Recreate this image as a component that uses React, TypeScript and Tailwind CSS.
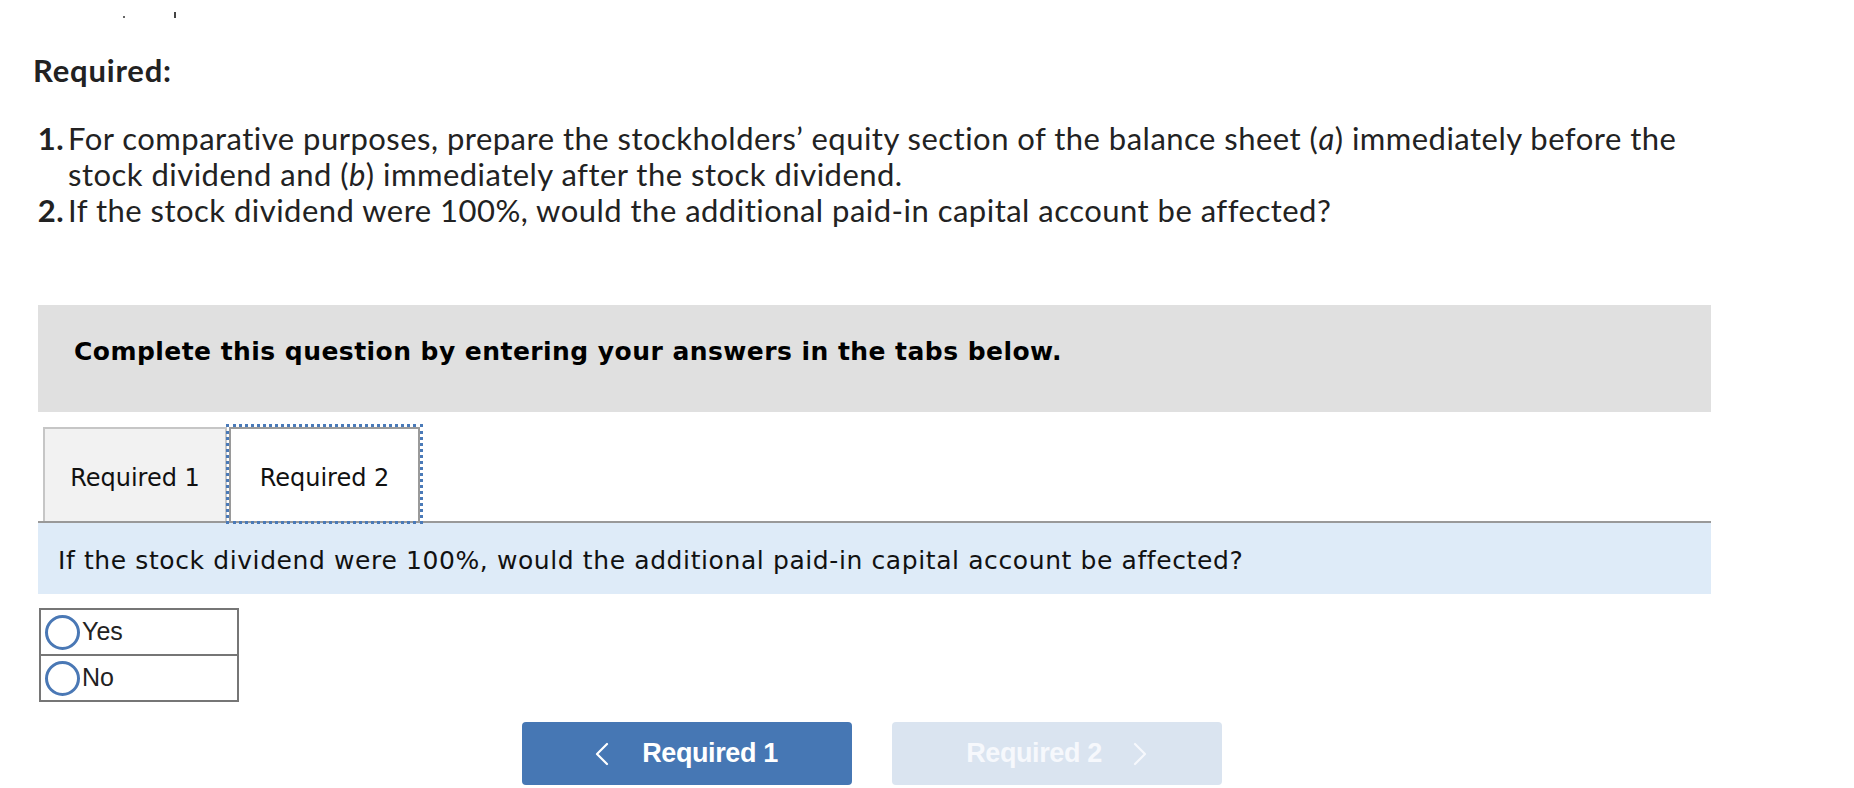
import React from 'react';

const QUESTION = 'If the stock dividend were 100%, would the additional paid-in capital account be affected?';

function Radio({ label }: { label: string }) {
  return (
    <label className="flex h-[48px] items-center border-2 border-[#767676] -mt-[2px] first:mt-0 pl-[4px]">
      <span className="h-[35px] w-[35px] rounded-full border-[3.5px] border-[#4a78b5] bg-white" />
      <span className="ml-[2px] text-[25px] text-[#222]" style={{ fontFamily: '"Liberation Sans", Arial, sans-serif' }}>
        {label}
      </span>
    </label>
  );
}

function Chevron({ dir }: { dir: 'left' | 'right' }) {
  return (
    <svg width="14" height="24" viewBox="0 0 14 24" fill="none">
      <polyline
        points={dir === 'left' ? '12,2 2,12 12,22' : '2,2 12,12 2,22'}
        stroke="currentColor"
        strokeWidth="2.2"
        strokeLinecap="round"
        strokeLinejoin="round"
      />
    </svg>
  );
}

export default function App() {
  return (
    <div className="min-h-[788px] w-[1854px] bg-white text-[#222]" style={{ fontFamily: 'Lato, "Noto Sans", sans-serif' }}>
      {/* clipped tail of the text above */}
      <div className="flex h-[20px] items-end pl-[123px] pb-[2px]">
        <span className="h-[2px] w-[2px] bg-[#666]" />
        <span className="ml-[49px] h-[6px] w-[2px] bg-[#444]" />
      </div>

      <div className="pl-[33px]">
        <h2 className="mt-[32px] text-[31px] font-bold leading-[36px] tracking-[0.8px] text-[#222]">Required:</h2>

        <ol className="mt-[32px] w-[1678px] text-[31px] leading-[36px] tracking-[0.48px] text-[#222]">
          <li className="flex">
            <span className="w-[31px] shrink-0 text-right font-bold">1.</span>
            <span className="ml-[4px]">
              For comparative purposes, prepare the stockholders’ equity section of the balance sheet (<i>a</i>) immediately
              before the stock dividend and (<i>b</i>) immediately after the stock dividend.
            </span>
          </li>
          <li className="flex">
            <span className="w-[31px] shrink-0 text-right font-bold">2.</span>
            <span className="ml-[4px]">If the stock dividend were 100%, would the additional paid-in capital account be affected?</span>
          </li>
        </ol>
      </div>

      <div className="ml-[38px] mt-[77px] w-[1673px]" style={{ fontFamily: '"DejaVu Sans", Verdana, sans-serif' }}>
        <div className="h-[107px] bg-[#e0e0e0] pl-[36px] pt-[32px]">
          <p className="text-[25px] font-bold leading-[30px] tracking-[0.45px] text-black">
            Complete this question by entering your answers in the tabs below.
          </p>
        </div>

        <div className="mt-[15px] flex items-end gap-[2px] border-b-2 border-[#999] pl-[5px]">
          <button className="flex h-[94px] w-[184px] items-center justify-center border-2 border-b-0 border-[#c6c6c6] bg-[#f2f2f2] pt-[6px] text-[24px] text-[#111]">
            Required 1
          </button>
          <button className="flex h-[94px] w-[191px] items-center justify-center border-2 border-b-0 border-[#9a9a9a] bg-white pt-[6px] text-[24px] text-[#111] outline-[3px] outline-offset-[0px] outline-dotted outline-[#4a7ab8]">
            Required 2
          </button>
        </div>

        <div className="flex h-[71px] items-center bg-[#deebf8] pl-[20px] pt-[4px] text-[25px] tracking-[0.6px] text-[#111]">{QUESTION}</div>

        <div className="mt-[14px] ml-[1px] w-[200px]">
          <Radio label="Yes" />
          <Radio label="No" />
        </div>

        <div className="mt-[20px] flex justify-center gap-[40px] pr-[6px]" style={{ fontFamily: '"Liberation Sans", Arial, sans-serif' }}>
          <button className="flex h-[63px] w-[330px] items-center justify-center gap-[33px] rounded-[4px] bg-[#4677b4] text-[27px] font-bold tracking-[-0.4px] text-white">
            <Chevron dir="left" />
            <span>Required 1</span>
          </button>
          <button disabled className="flex h-[63px] w-[330px] items-center justify-center gap-[31px] rounded-[4px] bg-[#dae4f0] text-[27px] font-bold tracking-[-0.4px] text-[#f6f8fc]">
            <span>Required 2</span>
            <Chevron dir="right" />
          </button>
        </div>
      </div>
    </div>
  );
}
